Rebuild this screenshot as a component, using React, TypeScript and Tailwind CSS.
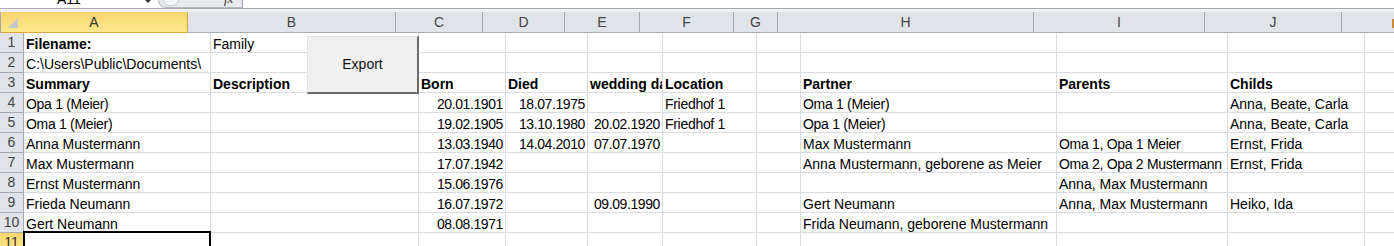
import React from "react";

type Cell = { t: string; b?: boolean; r?: boolean; clip?: boolean };
type Row = { n: number; cells: Partial<Record<string, Cell>> };

const cols = [
  { k: "A", w: 187 },
  { k: "B", w: 208 },
  { k: "C", w: 87 },
  { k: "D", w: 82 },
  { k: "E", w: 75 },
  { k: "F", w: 94 },
  { k: "G", w: 44 },
  { k: "H", w: 256 },
  { k: "I", w: 171 },
  { k: "J", w: 137 },
  { k: "K", w: 200 },
];

const d = (t: string): Cell => ({ t, r: true });

const rows: Row[] = [
  { n: 1, cells: { A: { t: "Filename:", b: true }, B: { t: "Family" } } },
  { n: 2, cells: { A: { t: "C:\\Users\\Public\\Documents\\" } } },
  {
    n: 3,
    cells: {
      A: { t: "Summary", b: true },
      B: { t: "Description", b: true },
      C: { t: "Born", b: true },
      D: { t: "Died", b: true },
      E: { t: "wedding date", b: true, clip: true },
      F: { t: "Location", b: true },
      H: { t: "Partner", b: true },
      I: { t: "Parents", b: true },
      J: { t: "Childs", b: true },
    },
  },
  {
    n: 4,
    cells: {
      A: { t: "Opa 1 (Meier)" },
      C: d("20.01.1901"),
      D: d("18.07.1975"),
      F: { t: "Friedhof 1" },
      H: { t: "Oma 1 (Meier)" },
      J: { t: "Anna, Beate, Carla" },
    },
  },
  {
    n: 5,
    cells: {
      A: { t: "Oma 1 (Meier)" },
      C: d("19.02.1905"),
      D: d("13.10.1980"),
      E: d("20.02.1920"),
      F: { t: "Friedhof 1" },
      H: { t: "Opa 1 (Meier)" },
      J: { t: "Anna, Beate, Carla" },
    },
  },
  {
    n: 6,
    cells: {
      A: { t: "Anna Mustermann" },
      C: d("13.03.1940"),
      D: d("14.04.2010"),
      E: d("07.07.1970"),
      H: { t: "Max Mustermann" },
      I: { t: "Oma 1, Opa 1 Meier" },
      J: { t: "Ernst, Frida" },
    },
  },
  {
    n: 7,
    cells: {
      A: { t: "Max Mustermann" },
      C: d("17.07.1942"),
      H: { t: "Anna Mustermann, geborene as Meier" },
      I: { t: "Oma 2, Opa 2 Mustermann" },
      J: { t: "Ernst, Frida" },
    },
  },
  {
    n: 8,
    cells: {
      A: { t: "Ernst Mustermann" },
      C: d("15.06.1976"),
      I: { t: "Anna, Max Mustermann" },
    },
  },
  {
    n: 9,
    cells: {
      A: { t: "Frieda Neumann" },
      C: d("16.07.1972"),
      E: d("09.09.1990"),
      H: { t: "Gert Neumann" },
      I: { t: "Anna, Max Mustermann" },
      J: { t: "Heiko, Ida" },
    },
  },
  {
    n: 10,
    cells: {
      A: { t: "Gert Neumann" },
      C: d("08.08.1971"),
      H: { t: "Frida Neumann, geborene Mustermann" },
    },
  },
  { n: 11, cells: {} },
];

const FormulaBar = () => (
  <div className="flex h-[9px] overflow-hidden bg-white border-b border-[#a7abb0]">
    <div className="w-[158px] relative">
      <span className="absolute left-[57px] top-[-8px] leading-[14px] text-[14px] text-black">
        A11
      </span>
      <svg className="absolute left-[145px] top-0" width="6" height="4" viewBox="0 0 6 4">
        <path d="M0 0 L6 0 L3 3 Z" fill="#333" />
      </svg>
    </div>
    <div className="w-[84px] relative bg-[#e7e9ec] border-l border-b border-[#b3b8be] rounded-bl-[14px]">
      <div className="absolute left-[4px] top-[-8px] w-[16px] h-[14px] rounded-full bg-[#f4f5f7] border border-[#c9cdd2]" />
      <span className="absolute left-[65px] top-[-8px] leading-[14px] text-[13px] italic text-[#333] font-['Liberation_Serif',serif]">
        fx
      </span>
    </div>
    <div className="w-px bg-[#9da2a8]" />
    <div className="flex-1" />
  </div>
);

const Corner = () => (
  <div className="w-[24px] h-[21px] bg-[#e0e3e8] border-r border-b border-[#a5aab0] relative">
    <svg className="absolute left-[7px] top-[5px]" width="12" height="12" viewBox="0 0 12 12">
      <path d="M11 1 L11 11 L1 11 Z" fill="#c3c7cc" />
    </svg>
  </div>
);

export default function App() {
  return (
    <div className="w-[1394px] h-[246px] overflow-hidden bg-white font-['Liberation_Sans',Arial,sans-serif] text-[14px] text-black">
      <FormulaBar />
      <div className="h-[3px] bg-[#eef0f3]" />
      <div className="relative">
        {/* column headers */}
        <div className="flex">
          <Corner />
          {cols.map((c) =>
            c.k === "A" ? (
              <div
                key={c.k}
                style={{ width: c.w }}
                className="shrink-0 h-[21px] leading-[20px] text-center text-[#333] bg-gradient-to-b from-[#f8d46f] to-[#ffe98c] border-r border-b border-[#e0a544]"
              >
                {c.k}
              </div>
            ) : (
              <div
                key={c.k}
                style={{ width: c.w }}
                className="shrink-0 h-[21px] leading-[20px] text-center text-[#444] bg-[#e0e3e8] border-r border-b border-[#a5aab0]"
              >
                {c.k}
              </div>
            )
          )}
        </div>

        {/* rows */}
        {rows.map((row) => (
          <div key={row.n} className="flex">
            <div
              className={
                row.n === 11
                  ? "shrink-0 w-[24px] h-[20px] leading-[19px] text-center text-[#333] bg-gradient-to-b from-[#f8d46f] to-[#ffe98c] border-r border-b border-[#e0a544]"
                  : "shrink-0 w-[24px] h-[20px] leading-[19px] text-center text-[#444] bg-[#e0e3e8] border-r border-b border-[#a5aab0]"
              }
            >
              {row.n}
            </div>
            {cols.map((c) => {
              const cell = row.cells[c.k];
              const digits = cell ? /\d/.test(cell.t) : false;
              return (
                <div
                  key={c.k}
                  style={{ width: c.w }}
                  className={
                    "shrink-0 h-[20px] pt-px leading-[20px] whitespace-nowrap border-r border-b border-[#dadcdd] " +
                    (cell?.clip ? "overflow-hidden pl-[2px] " : "") +
                    (cell?.r ? "text-right pr-[2px] tracking-[-0.4px] " : "pl-[2px] ") +
                    (digits && !cell?.r ? "tracking-[-0.3px] " : "") +
                    (cell?.b ? "font-bold" : "")
                  }
                >
                  {cell?.t}
                </div>
              );
            })}
          </div>
        ))}

        {/* Export button lying over B1:B3 */}
        <div className="absolute left-[307px] top-[24px] w-[112px] h-[58px] bg-[#f0f0f0] border-t border-l border-[#e3e3e3] border-r-2 border-b-2 border-r-[#6b6b6b] border-b-[#6b6b6b] flex items-center justify-center text-[14px] text-[#111]">
          Export
        </div>

        {/* active cell A11 */}
        <div className="absolute left-[23px] top-[219px] w-[188px] h-[24px] border-2 border-black" />

        {/* edge marker at the right of the header row */}
        <div className="absolute left-[1392px] top-[7px] w-[2px] h-[9px] bg-[#c98a3c]" />
      </div>
    </div>
  );
}
